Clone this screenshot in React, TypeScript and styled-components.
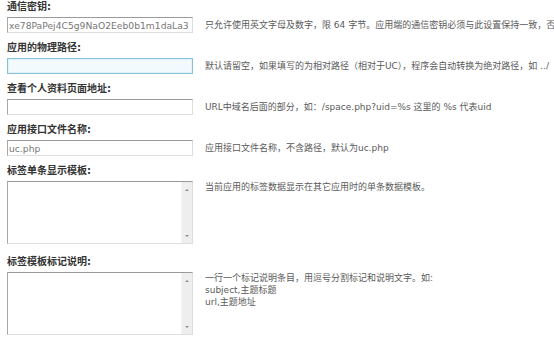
import React from "react";
import styled, { createGlobalStyle } from "styled-components";

interface Setting {
  label: string;
  kind: "input" | "textarea";
  value?: string;
  focused?: boolean;
  tip: string[];
}

const settings: Setting[] = [
  {
    label: "通信密钥:",
    kind: "input",
    value: "xe78PaPej4C5g9NaO2Eeb0b1m1daLa3",
    tip: ["只允许使用英文字母及数字，限 64 字节。应用端的通信密钥必须与此设置保持一致，否则"],
  },
  {
    label: "应用的物理路径:",
    kind: "input",
    focused: true,
    tip: ["默认请留空，如果填写的为相对路径（相对于UC），程序会自动转换为绝对路径，如 ../"],
  },
  {
    label: "查看个人资料页面地址:",
    kind: "input",
    tip: ["URL中域名后面的部分，如：/space.php?uid=%s 这里的 %s 代表uid"],
  },
  {
    label: "应用接口文件名称:",
    kind: "input",
    value: "uc.php",
    tip: ["应用接口文件名称，不含路径，默认为uc.php"],
  },
  {
    label: "标签单条显示模板:",
    kind: "textarea",
    tip: ["当前应用的标签数据显示在其它应用时的单条数据模板。"],
  },
  {
    label: "标签模板标记说明:",
    kind: "textarea",
    tip: ["一行一个标记说明条目，用逗号分割标记和说明文字。如:", "subject,主题标题", "url,主题地址"],
  },
];

const App = () => {
  return (
    <>
      <GlobalStyle />
      <Page>
        {settings.map(setting => (
          <Section key={setting.label} tall={setting.kind === "textarea"}>
            <Label>{setting.label}</Label>
            <Row tall={setting.kind === "textarea"}>
              {setting.kind === "input" ? (
                <TextInput defaultValue={setting.value ?? ""} focused={!!setting.focused} readOnly />
              ) : (
                <AreaBox>
                  <Area readOnly />
                  <ScrollTrack>
                    <Arrow up />
                    <Arrow />
                  </ScrollTrack>
                </AreaBox>
              )}
              <Tip tall={setting.kind === "textarea"}>
                {setting.tip.map(line => (
                  <div key={line}>{line}</div>
                ))}
              </Tip>
            </Row>
          </Section>
        ))}
      </Page>
    </>
  );
};

const GlobalStyle = createGlobalStyle`
  html, body {
    margin: 0;
    padding: 0;
    background: #ffffff;
    overflow: hidden;
  }
`;

const Page = styled.div`
  width: 554px;
  height: 339px;
  padding: 0 0 0 7px;
  box-sizing: border-box;
  font-family: "DejaVu Sans", "Noto Sans CJK SC", sans-serif;
  overflow: hidden;
`;

const Section = styled.div<{ tall: boolean }>`
  margin-bottom: ${({ tall }) => (tall ? "11px" : "8px")};
`;

const Label = styled.div`
  height: 13px;
  line-height: 13px;
  margin-bottom: 4px;
  font-size: 10px;
  font-weight: bold;
  color: #333333;
  white-space: nowrap;
`;

const Row = styled.div<{ tall: boolean }>`
  display: flex;
  align-items: ${({ tall }) => (tall ? "flex-start" : "center")};
  gap: 12px;
`;

const TextInput = styled.input<{ focused: boolean }>`
  flex: none;
  width: 186px;
  height: 16px;
  box-sizing: border-box;
  margin: 0;
  padding: 0 1px;
  font-family: "DejaVu Sans", sans-serif;
  font-size: 9.2px;
  color: #777777;
  outline: none;
  border: 1px solid;
  border-color: ${({ focused }) => (focused ? "#86c3da" : "#9a9a9a #dddddd #dddddd #a8a8a8")};
  background: ${({ focused }) => (focused ? "#f2fafd" : "#ffffff")};
  box-shadow: ${({ focused }) => (focused ? "inset 0 0 0 1px #e2f2f8" : "none")};
`;

const AreaBox = styled.div`
  flex: none;
  display: flex;
  width: 186px;
  height: 63px;
  box-sizing: border-box;
  border: 1px solid;
  border-color: #9a9a9a #dddddd #dddddd #a8a8a8;
  background: #ffffff;
`;

const Area = styled.textarea`
  flex: 1;
  margin: 0;
  padding: 2px;
  border: none;
  outline: none;
  resize: none;
  background: transparent;
`;

const ScrollTrack = styled.div`
  flex: none;
  width: 11px;
  display: flex;
  flex-direction: column;
  justify-content: space-between;
  align-items: center;
  padding: 7px 0 6px;
  box-sizing: border-box;
  background: #eeeeee;
  border-left: 1px solid #f6f6f6;
`;

const Arrow = styled.div<{ up?: boolean }>`
  width: 0;
  height: 0;
  border-left: 2.5px solid transparent;
  border-right: 2.5px solid transparent;
  border-bottom: ${({ up }) => (up ? "2.5px solid #8a8a8a" : "none")};
  border-top: ${({ up }) => (up ? "none" : "2.5px solid #8a8a8a")};
`;

const Tip = styled.div<{ tall: boolean }>`
  font-size: 9px;
  line-height: ${({ tall }) => (tall ? "12px" : "16px")};
  color: #5a5a5a;
  white-space: nowrap;
`;

export default App;
